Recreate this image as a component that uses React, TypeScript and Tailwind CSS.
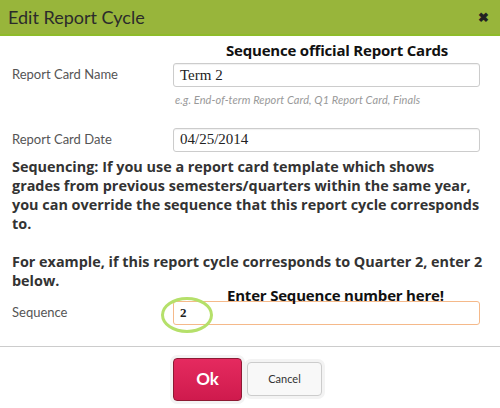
const sans = { fontFamily: "Lato, 'Open Sans', sans-serif" };

function Field({
  label,
  value,
  className = "",
  size = "text-[15px]",
}: {
  label: string;
  value: string;
  className?: string;
  size?: string;
}) {
  return (
    <div className="flex items-center">
      <div className="w-[161px] text-[13px] text-[#555]">{label}</div>
      <div
        className={`flex h-[24px] w-[307px] items-center rounded-[3px] border px-[6px] font-['Liberation_Serif',serif] text-[#222] ${size} ${className}`}
      >
        {value}
      </div>
    </div>
  );
}

export default function App() {
  return (
    <div className="relative h-[408px] w-[500px] overflow-hidden bg-white" style={sans}>
      <div className="flex h-[36px] items-center justify-between border-b-2 border-[#8fbb2a] bg-[#98b53b] pl-[8px] pr-[11px]">
        <span className="text-[18px] leading-none text-[#2b2b2b]">Edit Report Cycle</span>
        <span className="text-[13px] font-black leading-none text-[#222]">✖</span>
      </div>

      <div className="px-[12px]">
        <div className="mt-[27px]">
          <Field label="Report Card Name" value="Term 2" className="border-[#ccc] shadow-[inset_0_1px_1px_rgba(0,0,0,0.06)]" />
        </div>
        <div className="mt-[5px] pl-[163px] text-[11px] italic tracking-[0.1px] text-[#999]">
          e.g. End-of-term Report Card, Q1 Report Card, Finals
        </div>
        <div className="mt-[19px]">
          <Field label="Report Card Date" value="04/25/2014" className="border-[#ccc] shadow-[inset_0_1px_1px_rgba(0,0,0,0.06)]" />
        </div>
        <p
          className="mt-[5px] w-[472px] text-[14.4px] font-bold leading-[19px] text-[#333]"
          style={{ fontFamily: "'Open Sans', sans-serif" }}
        >
          Sequencing: If you use a report card template which shows grades from previous semesters/quarters within the
          same year, you can override the sequence that this report cycle corresponds to.
          <br />
          <br />
          For example, if this report cycle corresponds to Quarter 2, enter 2 below.
        </p>
        <div className="mt-[11px]">
          <Field label="Sequence" value="2" size="text-[13px]" className="border-[#f5b98a] font-bold" />
        </div>
      </div>

      <div className="mt-[21px] border-t border-[#ccc]" />

      <div className="mt-[11px] flex items-center gap-[5px] pl-[173px]">
        <button className="h-[43px] w-[69px] rounded-[4px] border border-[#8c1a33] bg-gradient-to-b from-[#e52a5f] to-[#cf1a4d] text-[17px] font-bold text-white shadow-[0_0_0_3px_#f3f3f3]">
          Ok
        </button>
        <button className="h-[34px] w-[75px] rounded-[4px] border border-[#ccc] bg-[#f8f8f8] text-[11px] text-[#333] shadow-[0_0_0_3px_#f3f3f3]">
          Cancel
        </button>
      </div>

      <div
        className="absolute left-[226px] top-[42px] text-[15px] font-bold leading-[16px] text-[#111]"
        style={{ fontFamily: "'Open Sans', sans-serif", letterSpacing: "-0.2px" }}
      >
        Sequence official Report Cards
      </div>
      <div
        className="absolute left-[227px] top-[290px] text-[15px] font-bold leading-[10px] text-[#111]"
        style={{ fontFamily: "'Open Sans', sans-serif", letterSpacing: "-0.2px" }}
      >
        Enter Sequence number here!
      </div>
      <div className="absolute left-[161px] top-[297px] h-[36px] w-[52px] rounded-[50%] border-[3px] border-[#b5e06a]" />
    </div>
  );
}
